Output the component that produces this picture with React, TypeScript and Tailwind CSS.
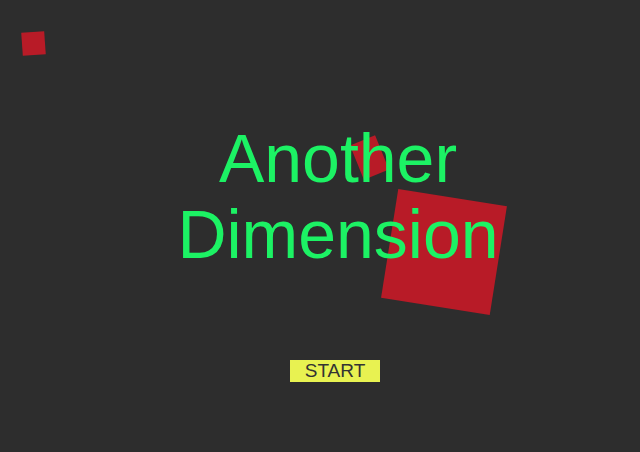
export default function App() {
  return (
    <div className="relative h-[452px] w-[640px] overflow-hidden bg-[#2d2d2d] font-['Liberation_Sans',Arial,sans-serif]">
      {/* floating squares */}
      <div className="absolute left-[22px] top-[32px] h-[23px] w-[23px] -rotate-[4deg] bg-[#b81b27]" />
      <div className="absolute left-[356px] top-[139px] h-[37px] w-[27px] -rotate-[22deg] bg-[#b81b27]" />
      <div className="absolute left-[389px] top-[197px] h-[110px] w-[110px] rotate-[9deg] bg-[#b81b27]" />

      <div className="relative flex flex-col items-center pl-[36px] pt-[120px]">
        <h1 className="text-center text-[68px] leading-[76px] font-normal text-[#1cf264]">
          Another
          <br />
          Dimension
        </h1>
        <button className="ml-[-6px] mt-[88px] h-[22px] w-[90px] bg-[#e8f251] text-[19px] leading-[22px] text-[#333]">
          START
        </button>
      </div>
    </div>
  );
}
